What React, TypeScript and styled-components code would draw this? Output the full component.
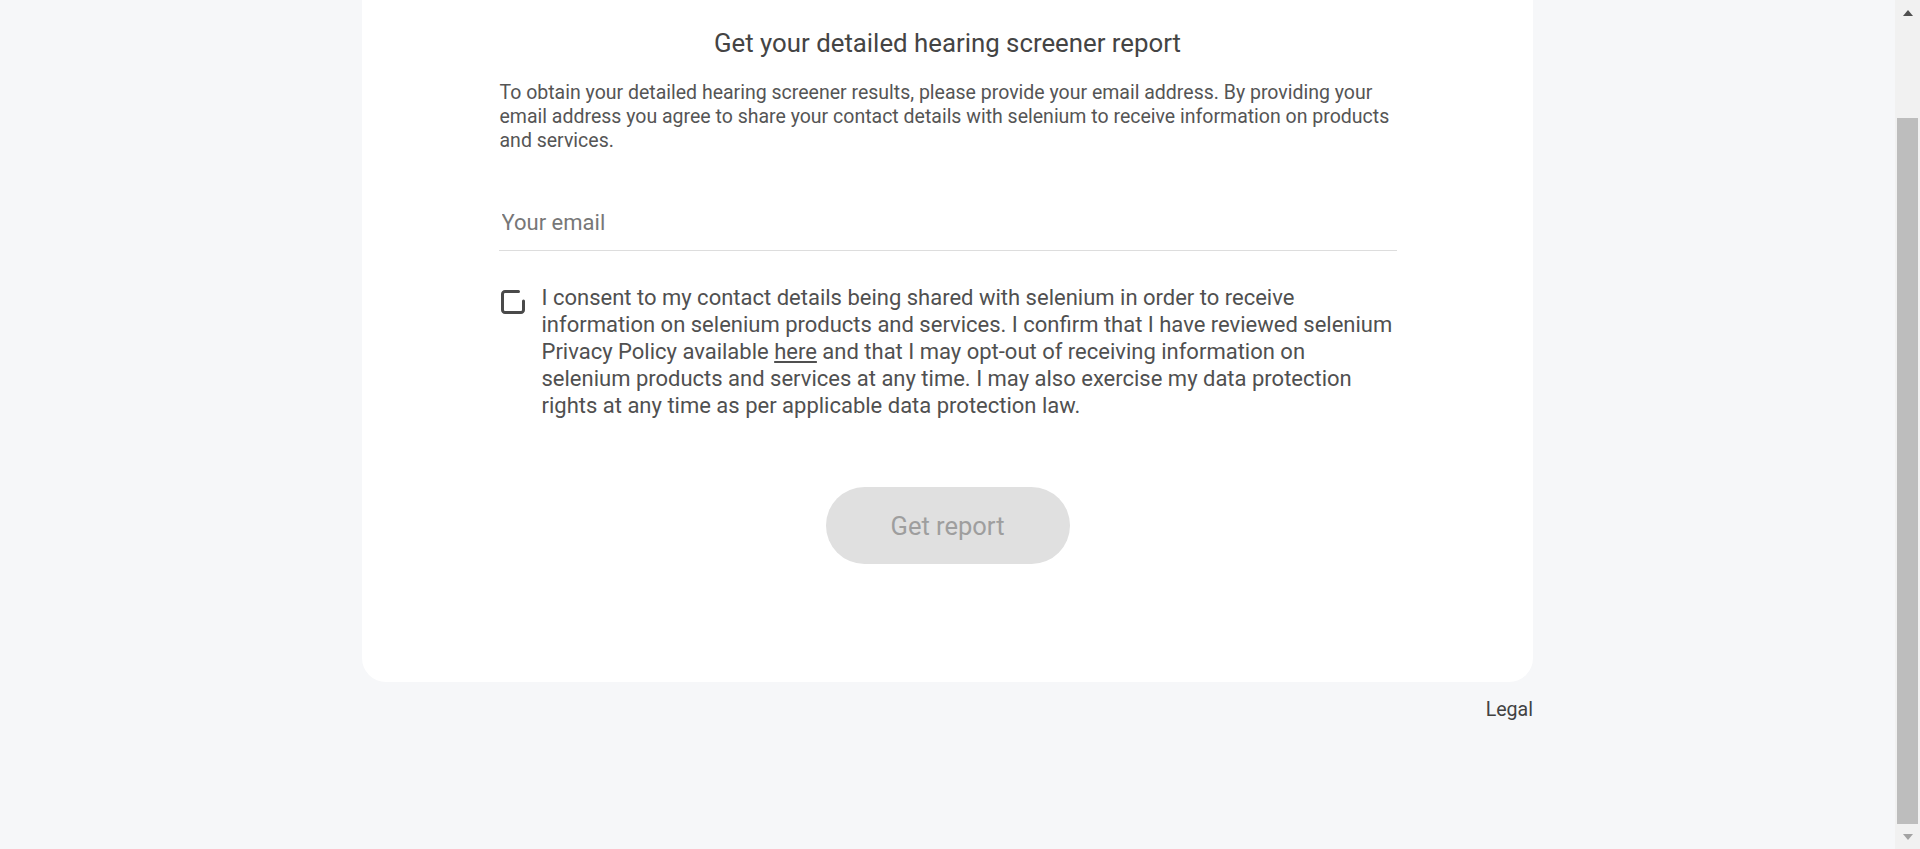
import React from "react";
import styled, { createGlobalStyle } from "styled-components";

const Global = createGlobalStyle`
  html, body {
    margin: 0;
    padding: 0;
    height: 100%;
    overflow: hidden;
    background: #f6f7f9;
    font-family: Roboto, "Noto Sans", Arial, sans-serif;
  }
  #root { height: 100%; }
  * { box-sizing: border-box; }
`;

const Frame = styled.div`
  display: flex;
  height: 100vh;
  overflow: hidden;
`;

const Main = styled.main`
  flex: 1;
  display: flex;
  flex-direction: column;
  align-items: center;
`;

const Column = styled.div`
  width: 1171px;
  display: flex;
  flex-direction: column;
`;

const Card = styled.section`
  background: #ffffff;
  border-radius: 0 0 24px 24px;
  padding: 27px 0 118px;
  display: flex;
  flex-direction: column;
  align-items: center;
`;

const Inner = styled.div`
  width: 898px;
  display: flex;
  flex-direction: column;
`;

const Title = styled.h2`
  margin: 0;
  font-size: 25.8px;
  line-height: 32px;
  font-weight: 400;
  color: #444444;
  text-align: center;
`;

const Intro = styled.p`
  margin: 22px 0 0 1px;
  font-size: 19.5px;
  line-height: 24px;
  color: #555555;
`;

const EmailInput = styled.input`
  margin-top: 46px;
  width: 100%;
  border: none;
  border-bottom: 1px solid #dddddd;
  background: transparent;
  font-family: inherit;
  font-size: 22px;
  line-height: 26px;
  height: 52px;
  padding: 10px 3px 15px;
  color: #424242;
  outline: none;
  &::placeholder { color: #777777; }
`;

const ConsentRow = styled.label`
  margin-top: 33px;
  display: flex;
  align-items: flex-start;
  gap: 16px;
  padding-left: 1px;
  cursor: pointer;
`;

const Box = styled.span`
  flex: none;
  width: 26px;
  height: 26px;
  margin-top: 5px;
  display: flex;
`;

const ConsentText = styled.span`
  font-size: 22px;
  line-height: 27px;
  color: #505050;
`;

const Link = styled.a`
  color: inherit;
  text-decoration: underline;
`;

const Button = styled.button`
  margin-top: 68px;
  align-self: center;
  width: 244px;
  height: 77px;
  border: none;
  border-radius: 39px;
  background: #e0e0e0;
  color: #9e9e9e;
  font-family: inherit;
  font-size: 25.5px;
  cursor: default;
`;

const Footer = styled.footer`
  display: flex;
  justify-content: flex-end;
  padding-top: 16px;
`;

const LegalLink = styled.a`
  font-size: 19.6px;
  line-height: 24px;
  color: #424242;
  text-decoration: none;
`;

const Rail = styled.div`
  flex: none;
  width: 25px;
  height: 100vh;
  background: #f1f1f1;
  display: flex;
  flex-direction: column;
`;

const ArrowButton = styled.div<{ $h: number }>`
  flex: none;
  height: ${(p) => p.$h}px;
  display: flex;
  align-items: center;
  justify-content: center;
`;

const Arrow = styled.span<{ $down?: boolean; $color: string }>`
  width: 0;
  height: 0;
  border-left: 5.5px solid transparent;
  border-right: 5.5px solid transparent;
  ${(p) =>
    p.$down
      ? `border-top: 6px solid ${p.$color};`
      : `border-bottom: 6px solid ${p.$color};`}
`;

const Track = styled.div`
  flex: 1;
  display: flex;
  flex-direction: column;
  padding: 93px 2px 0;
`;

const Thumb = styled.div`
  height: 706px;
  background: #bdbdbd;
`;

export default function App() {
  return (
    <>
      <Global />
      <Frame>
        <Main>
          <Column>
            <Card>
              <Inner>
                <Title>Get your detailed hearing screener report</Title>
                <Intro>
                  To obtain your detailed hearing screener results, please provide your email address. By providing your
                  email address you agree to share your contact details with selenium to receive information on products
                  and services.
                </Intro>
                <EmailInput type="email" placeholder="Your email" />
                <ConsentRow>
                  <Box>
                    <svg width="26" height="26" viewBox="0 0 26 26" fill="none">
                      <path
                        d="M18.5 2.5H5a2.5 2.5 0 0 0-2.5 2.5v16a2.5 2.5 0 0 0 2.5 2.5h16a2.5 2.5 0 0 0 2.5-2.5V12"
                        stroke="#4a4a4a"
                        strokeWidth="3"
                        strokeLinecap="round"
                      />
                    </svg>
                  </Box>
                  <ConsentText>
                    I consent to my contact details being shared with selenium in order to receive information on selenium
                    products and services. I confirm that I have reviewed selenium Privacy Policy available{" "}
                    <Link href="#">here</Link> and that I may opt-out of receiving information on selenium products and
                    services at any time. I may also exercise my data protection rights at any time as per applicable data
                    protection law.
                  </ConsentText>
                </ConsentRow>
                <Button disabled>Get report</Button>
              </Inner>
            </Card>
            <Footer>
              <LegalLink href="#">Legal</LegalLink>
            </Footer>
          </Column>
        </Main>
        <Rail>
          <ArrowButton $h={25}>
            <Arrow $color="#505050" />
          </ArrowButton>
          <Track>
            <Thumb />
          </Track>
          <ArrowButton $h={25}>
            <Arrow $down $color="#a3a3a3" />
          </ArrowButton>
        </Rail>
      </Frame>
    </>
  );
}
